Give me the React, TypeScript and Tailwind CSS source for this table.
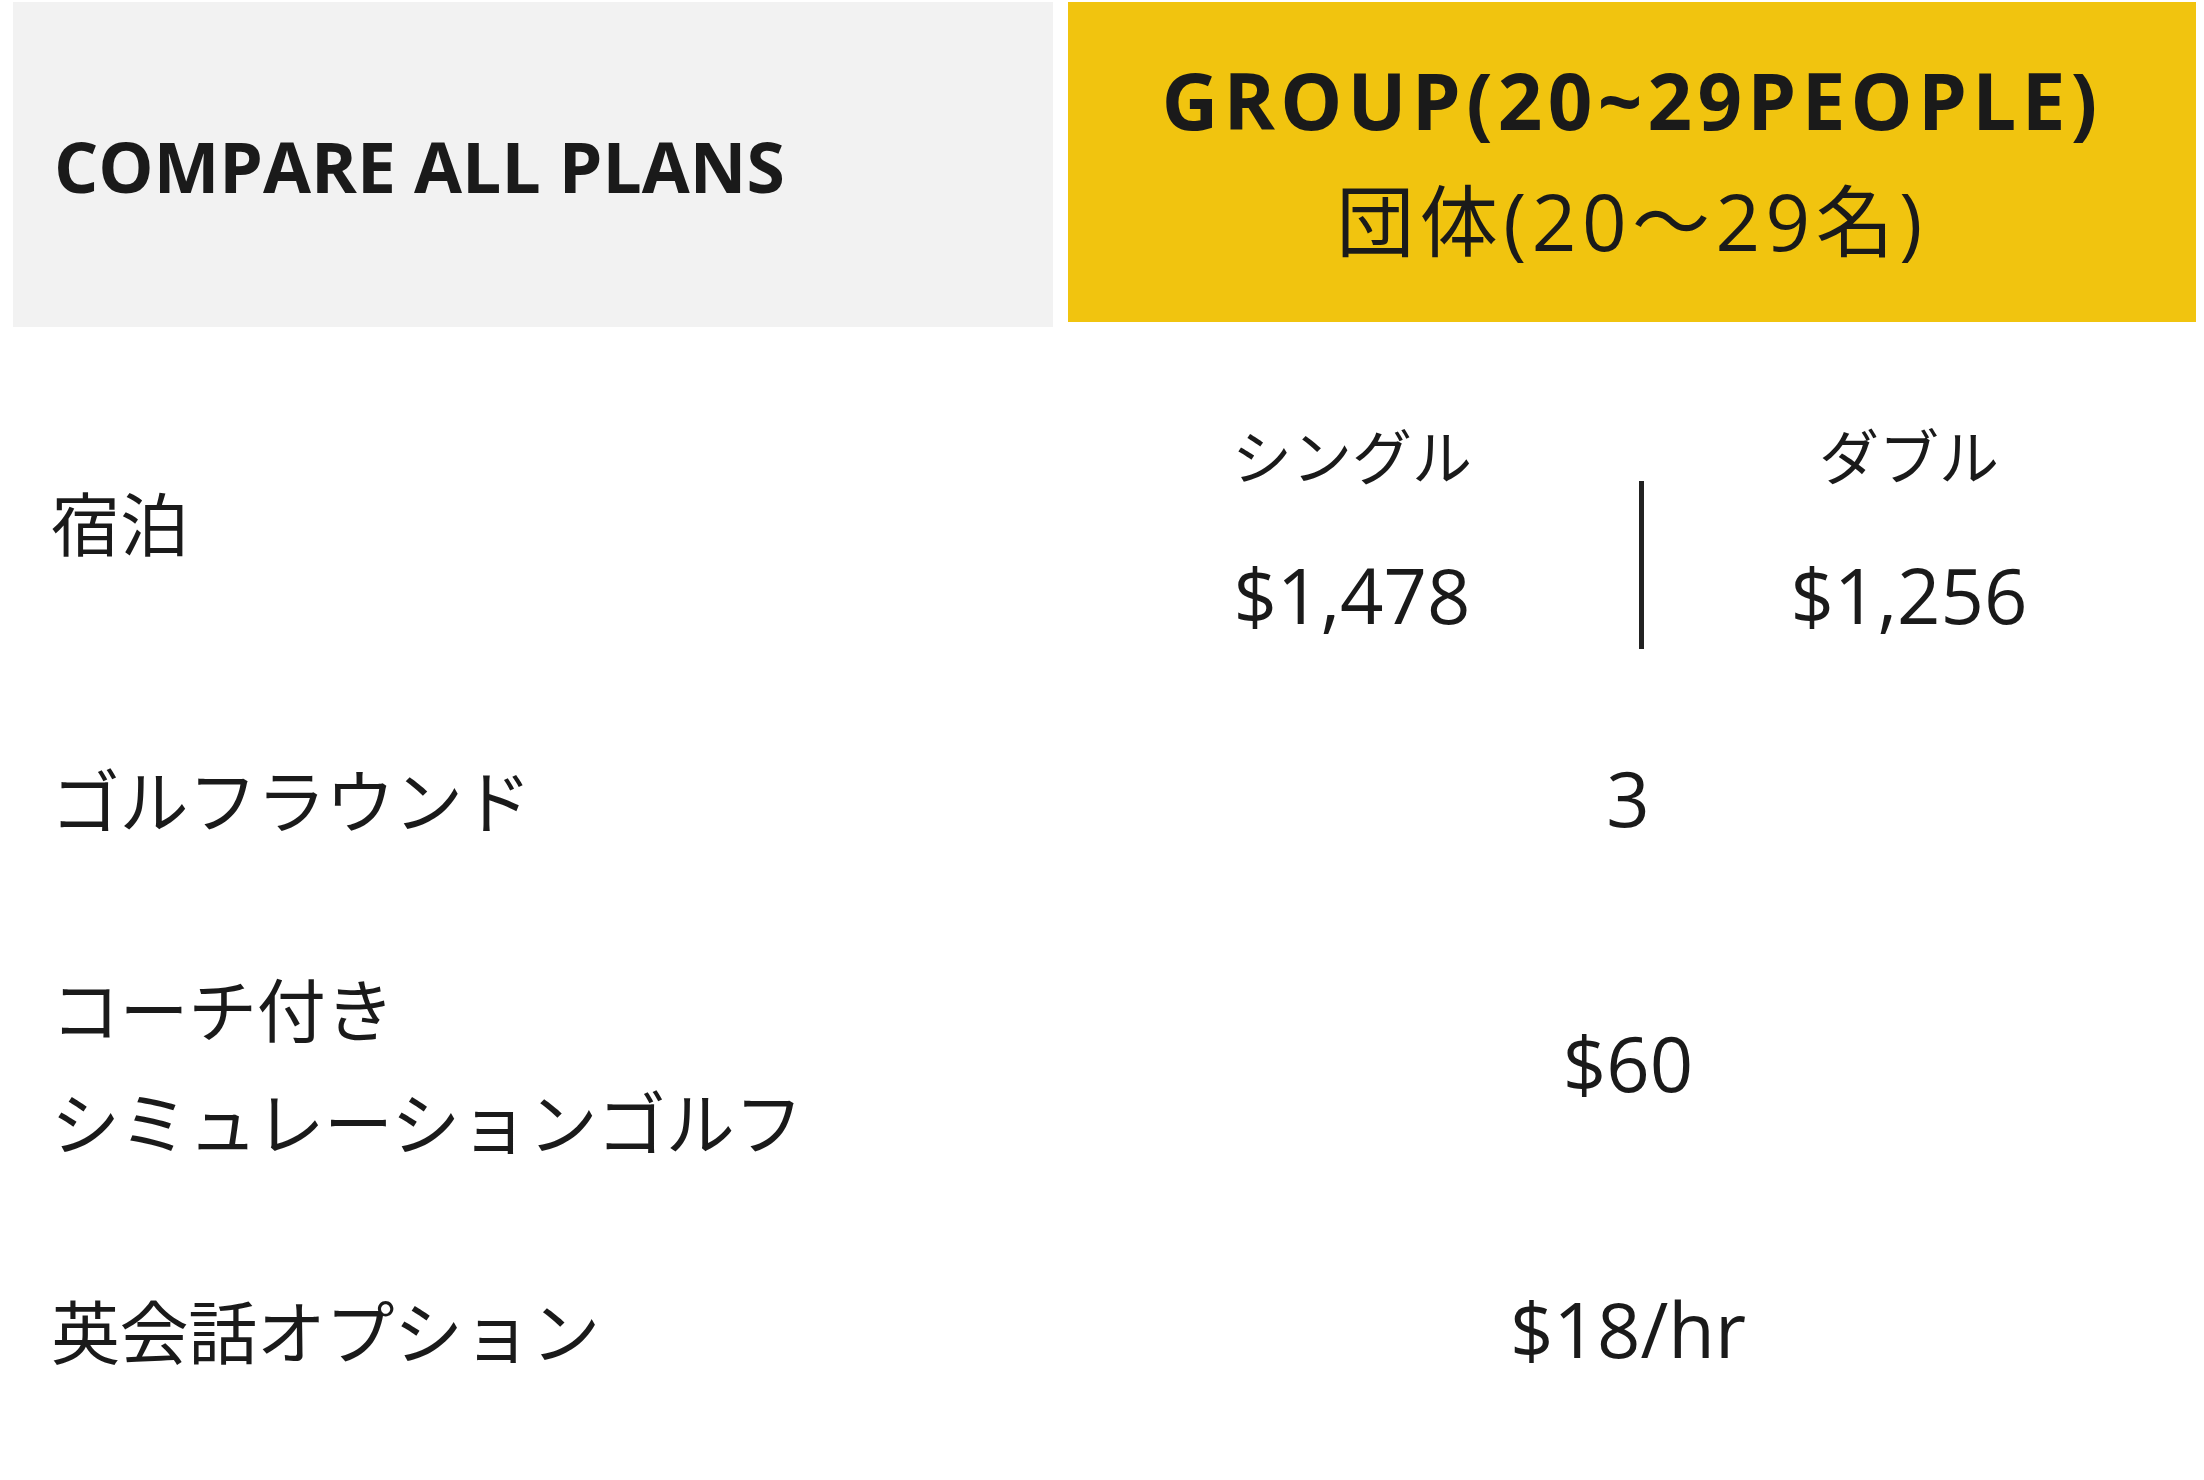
import React from 'react';

const FONT = { fontFamily: '"Open Sans", "Noto Sans CJK JP", sans-serif' };

interface Row {
    label: string[];
    value: string;
}

const rows: Row[] = [
    { label: ['ゴルフラウンド'], value: '3' },
    { label: ['コーチ付き', 'シミュレーションゴルフ'], value: '$60' },
    { label: ['英会話オプション'], value: '$18/hr' },
];

const RoomPrice: React.FC<{ kind: string; price: string; width: string }> = ({ kind, price, width }) => (
    <div className={`flex flex-col ${width}`}>
        <div className="h-[114px] flex items-center justify-center text-[60px] leading-none">{kind}</div>
        <div className="h-[135px] pt-[26px] flex items-center justify-center text-[76px] leading-none">{price}</div>
    </div>
);

export default function App() {
    return (
        <div className="w-[2204px] min-h-[1480px] bg-white text-[#1a1a1a] pt-[2px]" style={FONT}>
            {/* header */}
            <div className="flex gap-[15px] pl-[13px] items-start">
                <div className="w-[1040px] h-[325px] bg-[#f2f2f2] flex items-center pl-[41px] pt-[4px]">
                    <h1 className="text-[69.6px] font-bold leading-none">COMPARE ALL PLANS</h1>
                </div>
                <div className="w-[1128px] h-[320px] bg-[#f1c40f] flex flex-col items-center justify-center tracking-[5px] pb-[2px]">
                    <div className="text-[78px] font-bold leading-[121px] tracking-[5.3px]">GROUP(20~29PEOPLE)</div>
                    <div className="text-[78px] leading-[121px] tracking-[5.5px]">団体(20〜29名)</div>
                </div>
            </div>

            {/* rows */}
            <div className="mt-[25px]">
                <div className="flex h-[345px] items-center">
                    <div className="w-[1068px] pl-[51px] text-[69px] leading-[113px]">宿泊</div>
                    <div className="flex">
                        <RoomPrice kind="シングル" price="$1,478" width="w-[568px]" />
                        <div className="ml-[3px] mt-[81px] w-[5px] bg-[#222]" />
                        <RoomPrice kind="ダブル" price="$1,256" width="w-[530px]" />
                    </div>
                </div>

                {rows.map((row) => (
                    <div key={row.value} className="flex items-center py-[48px]">
                        <div className="w-[1068px] pl-[51px] text-[69px] leading-[113px] tracking-[-0.4px]">
                            {row.label.map((line) => (
                                <div key={line}>{line}</div>
                            ))}
                        </div>
                        <div className="w-[1128px] pr-[8px] pb-[8px] text-center text-[76px] leading-none">{row.value}</div>
                    </div>
                ))}
            </div>
        </div>
    );
}
